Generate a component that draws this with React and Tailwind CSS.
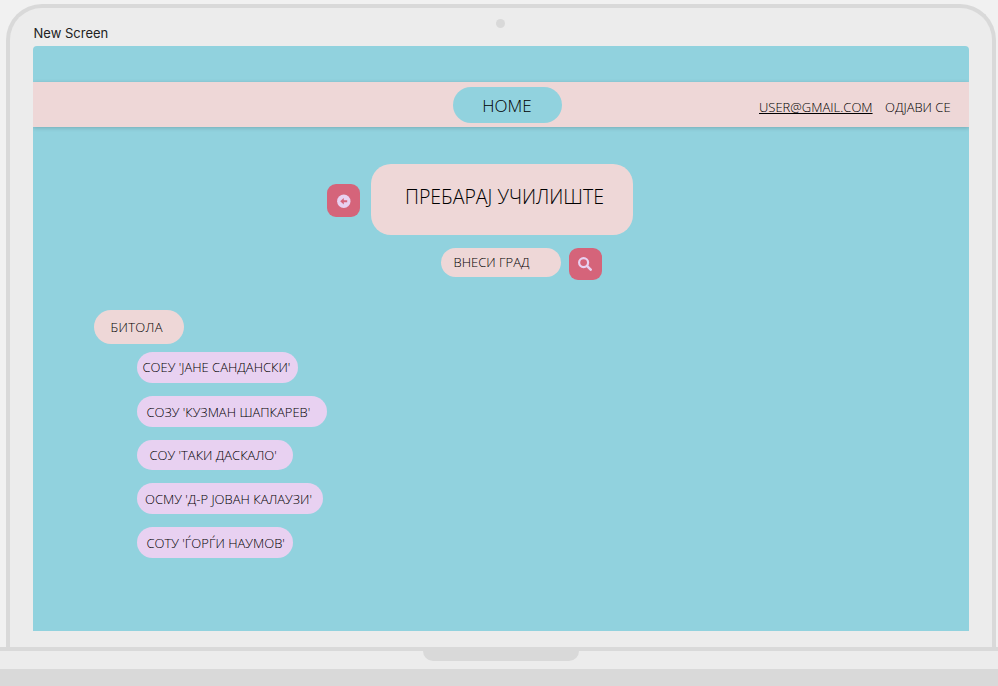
const schools = [
  { name: "СОЕУ 'ЈАНЕ САНДАНСКИ'", box: "w-[161.5px] pl-[6px] leading-[31px]" },
  { name: "СОЗУ 'КУЗМАН ШАПКАРЕВ'", box: "w-[190.5px] pl-[10px] leading-[32px]" },
  { name: "СОУ 'ТАКИ ДАСКАЛО'", box: "w-[156.5px] pl-[13px] leading-[30px]" },
  { name: "ОСМУ 'Д-Р ЈОВАН КАЛАУЗИ'", box: "w-[186.5px] pl-[8.5px] leading-[33px]" },
  { name: "СОТУ 'ЃОРЃИ НАУМОВ'", box: "w-[156.5px] pl-[10px] leading-[33px]" },
];

function BackIcon() {
  return (
    <svg width="14" height="14" viewBox="0 0 14 14">
      <circle cx="6.8" cy="7.2" r="6.7" fill="#e8d1f1" />
      <path d="M3.2 7.2 6.8 4v2.2h3.4v2H6.8v2.2z" fill="#d5647a" />
    </svg>
  );
}

function SearchIcon() {
  return (
    <svg className="-mt-px" width="14" height="14" viewBox="0 0 14 14" fill="none" stroke="#e8d1f1" strokeLinecap="round">
      <circle cx="5.6" cy="5.6" r="4.5" strokeWidth="2.2" />
      <path d="m9.2 9.2 3.5 3.5" strokeWidth="2.5" />
    </svg>
  );
}

function NavBar() {
  return (
    <nav className="flex h-[45px] items-start bg-[#eed7d7] pt-[5px] shadow-[0_1px_4px_rgba(0,0,0,0.18)]">
      <button className="ml-[420px] h-[36px] w-[109px] rounded-full bg-[#91d2de] pr-px text-center text-[17px] leading-[38px]">
        HOME
      </button>
      <a className="ml-[197px] mt-[10px] w-[114px] text-[13px] leading-5 underline">USER@GMAIL.COM</a>
      <a className="ml-3 mt-[10px] text-[13px] leading-5">ОДЈАВИ СЕ</a>
    </nav>
  );
}

function SearchPanel() {
  return (
    <section>
      <div className="flex pl-[294px] pt-[37px]">
        <button className="mt-[20px] flex size-[33px] items-center justify-center rounded-[9px] bg-[#d5647a]">
          <BackIcon />
        </button>
        <h1 className="ml-[11px] h-[71px] w-[262px] rounded-[20px] bg-[#eed7d7] pl-[34px] text-[19.5px] leading-[65px]">
          ПРЕБАРАЈ УЧИЛИШТЕ
        </h1>
      </div>
      <div className="flex pl-[408px] pt-[13px]">
        <div className="h-[29px] w-[120px] rounded-full bg-[#eed7d7] pl-[12.5px] text-[13px] leading-[29px]">
          ВНЕСИ ГРАД
        </div>
        <button className="ml-[7.5px] flex h-[32px] w-[33px] items-center justify-center rounded-[9px] bg-[#d5647a]">
          <SearchIcon />
        </button>
      </div>
    </section>
  );
}

function SchoolList() {
  return (
    <section className="pl-[61px] pt-[30px]">
      <h2 className="h-[34px] w-[90px] rounded-full bg-[#eed7d7] pl-[16.5px] text-[13px] leading-[35px] tracking-[0.3px]">
        БИТОЛА
      </h2>
      <ul className="flex flex-col gap-[13px] pl-[42.5px] pt-[8px]">
        {schools.map((s) => (
          <li key={s.name} className={`h-[30.7px] rounded-full bg-[#e8d1f1] text-[13px] ${s.box}`}>
            {s.name}
          </li>
        ))}
      </ul>
    </section>
  );
}

export default function App() {
  return (
    <div className="flex h-[686px] w-[998px] flex-col overflow-hidden bg-[#f1f1f1] pt-1 text-black">
      <div className="relative ml-[6px] h-[643px] w-[990px] shrink-0 rounded-t-[36px] border-4 border-b-0 border-[#d9d9d9] bg-[#ececec] px-[23px]">
        <i className="absolute left-[486px] top-[11px] size-[9px] rounded-full bg-[#d9d9d9]" />
        <p className="pl-[0.5px] pt-[15px] font-['Inter',sans-serif] text-[13px] leading-5 text-[#222]">New Screen</p>
        <main className="mt-[3px] h-[585px] w-[936px] overflow-hidden whitespace-nowrap rounded-t-[4px] bg-[#91d2de] pt-[36.4px] font-['Open_Sans',sans-serif] font-light">
          <NavBar />
          <SearchPanel />
          <SchoolList />
        </main>
      </div>
      <div className="flex h-[22px] shrink-0 border-t-[4px] border-[#d9d9d9] bg-[#ececec] pl-[423px]">
        <div className="h-[10px] w-[156px] rounded-b-[14px] bg-[#d9d9d9]" />
      </div>
      <div className="flex-1 bg-[#d9d9d9]" />
    </div>
  );
}
